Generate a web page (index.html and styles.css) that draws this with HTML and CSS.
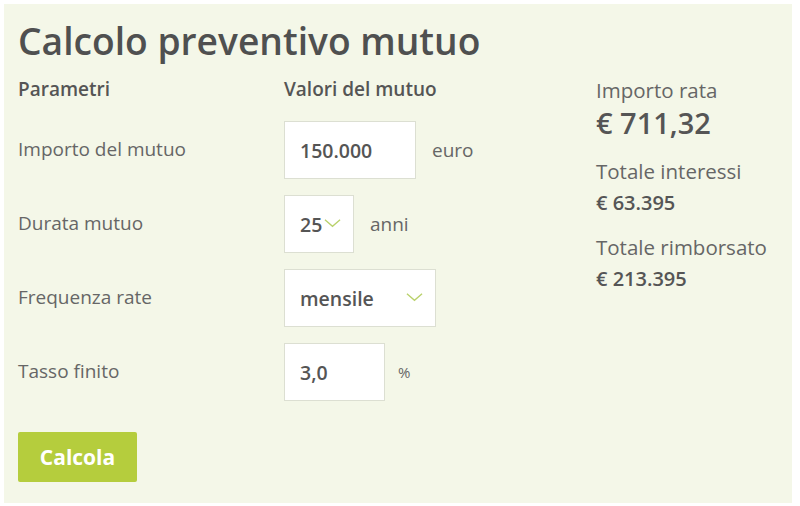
FILE: index.html
```html
<!DOCTYPE html>
<html lang="it">
<head>
<meta charset="utf-8">
<title>Calcolo preventivo mutuo</title>
<link rel="stylesheet" href="styles.css">
</head>
<body>
<div class="panel">
  <h1 class="title">Calcolo preventivo mutuo</h1>
  <div class="content">
    <div class="form">
      <div class="head">Parametri</div>
      <div class="head">Valori del mutuo</div>

      <div class="label">Importo del mutuo</div>
      <div class="field"><div class="box box-amount">150.000</div><span class="unit">euro</span></div>

      <div class="label">Durata mutuo</div>
      <div class="field"><div class="box box-years">25<svg class="chev" viewBox="0 0 18 10"><path d="M1 1.5 L9 8.5 L17 1.5"/></svg></div><span class="unit">anni</span></div>

      <div class="label">Frequenza rate</div>
      <div class="field"><div class="box box-freq">mensile<svg class="chev" viewBox="0 0 18 10"><path d="M1 1.5 L9 8.5 L17 1.5"/></svg></div></div>

      <div class="label">Tasso finito</div>
      <div class="field"><div class="box box-rate">3,0</div><span class="unit unit-small">%</span></div>

      <div class="actions"><button class="btn" type="button">Calcola</button></div>
    </div>
    <div class="results">
      <div class="r-label">Importo rata</div>
      <div class="r-main">€ 711,32</div>
      <div class="r-label r-gap-first">Totale interessi</div>
      <div class="r-value">€ 63.395</div>
      <div class="r-label r-gap">Totale rimborsato</div>
      <div class="r-value">€ 213.395</div>
    </div>
  </div>
</div>
</body>
</html>
```
FILE: styles.css
```css
* { box-sizing: border-box; }
html, body { margin: 0; padding: 0; background: #ffffff; }
body { font-family: "Open Sans", "DejaVu Sans", sans-serif; color: #5a5a5a; }

.panel {
  margin: 4px;
  width: 788px;
  height: 499px;
  padding: 12px 14px 0;
  background: #f4f7e8;
}

.title {
  margin: 0;
  font-size: 37.2px;
  font-weight: 600;
  line-height: 50px;
  color: #4f5050;
}

.content {
  display: flex;
  margin-top: 12px;
}

.form {
  width: 578px;
  display: grid;
  grid-template-columns: 266px 1fr;
  grid-auto-rows: 58px;
  grid-template-rows: 27px;
  row-gap: 16px;
  align-items: center;
}

.head {
  font-size: 19px;
  font-weight: 600;
  color: #555;
  line-height: 24px;
  margin-bottom: 5px;
}

.label {
  font-size: 19px;
  color: #666;
  padding-bottom: 2px;
}

.field {
  display: flex;
  align-items: center;
  height: 58px;
}

.box {
  height: 58px;
  background: #fff;
  border: 1px solid #dcdfd2;
  display: flex;
  align-items: center;
  padding-left: 15px;
  font-size: 19.5px;
  font-weight: 600;
  color: #555;
}
.box-amount { width: 132px; }
.box-years { width: 70px; }
.box-freq { width: 152px; justify-content: space-between; padding-right: 12px; }
.box-rate { width: 101px; }

.chev {
  width: 17px;
  height: 10px;
  margin-left: 2px;
  margin-top: -3px;
  fill: none;
  stroke: #b9d16b;
  stroke-width: 1.4;
}

.unit {
  margin-left: 16px;
  font-size: 19px;
  color: #666;
}
.unit-small { font-size: 15px; margin-left: 13px; }

.actions {
  grid-column: 1 / span 2;
  align-self: start;
  margin-top: 15px;
}

.btn {
  width: 119px;
  height: 50px;
  border: 0;
  border-radius: 2px;
  background: #b5cd3d;
  color: #fff;
  font-family: "Open Sans", "DejaVu Sans", sans-serif;
  font-size: 21px;
  font-weight: 700;
  padding: 0;
  cursor: pointer;
}

.results {
  display: flex;
  flex-direction: column;
  margin-top: -1px;
}

.r-label {
  font-size: 20.5px;
  line-height: 26px;
  color: #666;
}
.r-gap-first { margin-top: 15px; }
.r-gap { margin-top: 18px; }

.r-main {
  font-size: 29px;
  line-height: 40px;
  font-weight: 600;
  color: #555;
}

.r-value {
  margin-top: 6px;
  font-size: 20px;
  line-height: 26px;
  font-weight: 600;
  color: #555;
}
```
